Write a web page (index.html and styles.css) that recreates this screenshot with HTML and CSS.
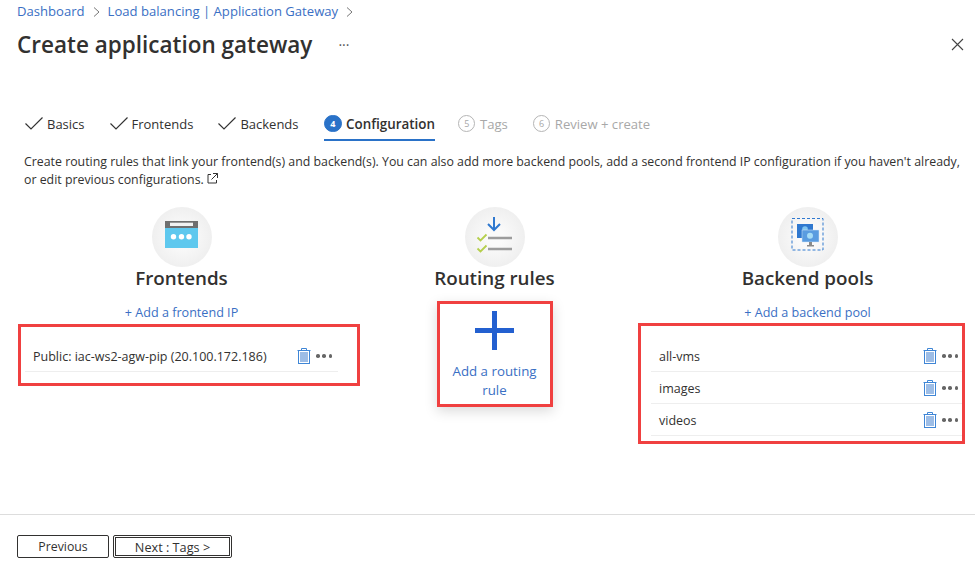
FILE: index.html
```html
<!DOCTYPE html>
<html lang="en">
<head>
    <meta charset="UTF-8">
    <meta name="viewport" content="width=device-width, initial-scale=1.0">
    <title>Create application gateway</title>
    <link rel="stylesheet" href="styles.css">
</head>
<body>
    <div class="top">
        <nav class="crumbs">
            <a>Dashboard</a>
            <svg class="crumb-sep" width="7" height="10" viewBox="0 0 7 10"><path d="M1 .5 6 5 1 9.500" fill="none" stroke="#777" stroke-width="1"/></svg>
            <a>Load balancing | Application Gateway</a>
            <svg class="crumb-sep" width="7" height="10" viewBox="0 0 7 10"><path d="M1 .5 6 5 1 9.500" fill="none" stroke="#777" stroke-width="1"/></svg>
        </nav>
        <div class="title-row">
            <h1>Create application gateway</h1>
            <span class="title-more">···</span>
            <svg class="close" width="13" height="13" viewBox="0 0 13 13"><path d="M1 1 12 12M12 1 1 12" stroke="#444" stroke-width="1.100"/></svg>
        </div>
    </div>

    <div class="tabs">
        <div class="tab done"><svg width="18" height="13" viewBox="0 0 18 13"><path d="M.5 6.500 6 12 17.500 .5" fill="none" stroke="#333" stroke-width="1.200"/></svg>Basics</div>
        <div class="tab done"><svg width="18" height="13" viewBox="0 0 18 13"><path d="M.5 6.500 6 12 17.500 .5" fill="none" stroke="#333" stroke-width="1.200"/></svg>Frontends</div>
        <div class="tab done"><svg width="18" height="13" viewBox="0 0 18 13"><path d="M.5 6.500 6 12 17.500 .5" fill="none" stroke="#333" stroke-width="1.200"/></svg>Backends</div>
        <div class="tab active"><span class="step">4</span>Configuration</div>
        <div class="tab off"><span class="step">5</span>Tags</div>
        <div class="tab off"><span class="step">6</span>Review + create</div>
    </div>

    <p class="intro">Create routing rules that link your frontend(s) and backend(s). You can also add more backend pools, add a second frontend IP configuration if you haven't already, or edit previous configurations.
        <svg width="11" height="11" viewBox="0 0 11 11"><path d="M4 1.500H1v8.500h8.500V7M6 .5h4.500V5M10.500 .5 4.500 6.500" fill="none" stroke="#333" stroke-width="1"/></svg>
    </p>

    <main class="cols">
        <section class="col">
            <div class="badge">
                <svg width="60" height="60" viewBox="0 0 60 60">
                    <rect x="13" y="14" width="33" height="27" fill="#5ec8ee"/>
                    <rect x="13" y="14" width="33" height="7" fill="#6f6f6f"/>
                    <rect x="18" y="15.700" width="23" height="3.300" fill="#f2f2f2"/>
                    <circle cx="21.500" cy="29.700" r="2.700" fill="#fff"/><circle cx="29.500" cy="29.700" r="2.700" fill="#fff"/><circle cx="37" cy="29.700" r="2.700" fill="#fff"/>
                </svg>
            </div>
            <h2>Frontends</h2>
            <a class="add">+ Add a frontend IP</a>
            <div class="list">
                <div class="row"><span>Public: iac-ws2-agw-pip (20.100.172.186)</span>
                    <svg class="trash" width="14" height="16" viewBox="0 0 14 16"><path d="M4.500 2.500V.5h5v2M.5 2.500h13" fill="none" stroke="#3f86d6"/><rect x="1.500" y="2.500" width="11" height="13" fill="#fff" stroke="#3f86d6"/><rect x="3" y="4" width="8" height="10" fill="#9dbde6"/></svg>
                    <span class="dots"><i></i><i></i><i></i></span>
                </div>
                <div class="mark mark-front"></div>
            </div>
        </section>

        <section class="col">
            <div class="badge">
                <svg width="60" height="60" viewBox="0 0 60 60">
                    <path d="M29 10v13M23 17l6 6 6-6" fill="none" stroke="#2f78cf" stroke-width="2"/>
                    <path d="M12.500 30.500l3 3 6-6M12.500 41.500l3 3 6-6" fill="none" stroke="#b5cf4c" stroke-width="1.800"/>
                    <path d="M23 31h24M23 42h24" stroke="#9c9c9c" stroke-width="2.500"/>
                </svg>
            </div>
            <h2>Routing rules</h2>
            <div class="rule-card">
                <svg width="39" height="39" viewBox="0 0 39 39"><path d="M19.500 0v39M0 19.500h39" stroke="#2360d0" stroke-width="5"/></svg>
                <a>Add a routing rule</a>
            </div>
        </section>

        <section class="col">
            <div class="badge">
                <svg width="60" height="60" viewBox="0 0 60 60">
                    <rect x="14" y="11.500" width="31" height="31.500" fill="none" stroke="#2f78cf" stroke-dasharray="3 2"/>
                    <rect x="19" y="17" width="16" height="14" fill="#2f78cf"/>
                    <circle cx="27" cy="22" r="2.800" fill="#7fc4ef"/>
                    <rect x="24" y="23" width="17" height="12" fill="#5a9ce0" stroke="#d8e8f8" stroke-width=".5"/>
                    <circle cx="32" cy="28.700" r="3" fill="#a6dcf6"/>
                    <path d="M31 35h3v3h2v1.500h-7V38h2z" fill="#8a8a8a"/>
                </svg>
            </div>
            <h2>Backend pools</h2>
            <a class="add">+ Add a backend pool</a>
            <div class="list">
                <div class="row"><span>all-vms</span>
                    <svg class="trash" width="14" height="16" viewBox="0 0 14 16"><path d="M4.500 2.500V.5h5v2M.5 2.500h13" fill="none" stroke="#3f86d6"/><rect x="1.500" y="2.500" width="11" height="13" fill="#fff" stroke="#3f86d6"/><rect x="3" y="4" width="8" height="10" fill="#9dbde6"/></svg>
                    <span class="dots"><i></i><i></i><i></i></span>
                </div>
                <div class="row"><span>images</span>
                    <svg class="trash" width="14" height="16" viewBox="0 0 14 16"><path d="M4.500 2.500V.5h5v2M.5 2.500h13" fill="none" stroke="#3f86d6"/><rect x="1.500" y="2.500" width="11" height="13" fill="#fff" stroke="#3f86d6"/><rect x="3" y="4" width="8" height="10" fill="#9dbde6"/></svg>
                    <span class="dots"><i></i><i></i><i></i></span>
                </div>
                <div class="row"><span>videos</span>
                    <svg class="trash" width="14" height="16" viewBox="0 0 14 16"><path d="M4.500 2.500V.5h5v2M.5 2.500h13" fill="none" stroke="#3f86d6"/><rect x="1.500" y="2.500" width="11" height="13" fill="#fff" stroke="#3f86d6"/><rect x="3" y="4" width="8" height="10" fill="#9dbde6"/></svg>
                    <span class="dots"><i></i><i></i><i></i></span>
                </div>
                <div class="mark mark-back"></div>
            </div>
        </section>
    </main>

    <footer class="foot">
        <button class="btn">Previous</button>
        <button class="btn btn-next">Next : Tags &gt;</button>
    </footer>
</body>
</html>
```

FILE: styles.css
```css
html, body {
    margin: 0;
    height: 100%;
}
body {
    display: flex;
    flex-direction: column;
    height: 567px;
    overflow: hidden;
    background-color: white;
    color: #323130;
    font-family: "Open Sans", "Noto Sans", sans-serif;
    font-size: 12.5px;
}
a {
    color: #3a6fc4;
}

.top {
    padding: 2px 11px 0 17px;
}
.crumbs {
    display: flex;
    align-items: center;
    gap: 8px;
    height: 17px;
    font-size: 13.100px;
}
.crumb-sep {
    margin-top: 2px;
}
.title-row {
    display: flex;
    align-items: center;
    margin-top: 8px;
    height: 34px;
}
h1 {
    margin: 0;
    font-size: 22.500px;
    font-weight: 600;
    color: #323130;
}
.title-more {
    margin-left: 26px;
    font-size: 14px;
    color: #555;
}
.close {
    margin-left: auto;
}

.tabs {
    display: flex;
    gap: 25px;
    margin: 47px 0 0 25px;
    height: 33px;
}
.tab {
    display: flex;
    align-items: center;
    gap: 4px;
    box-sizing: border-box;
    height: 33px;
    padding-bottom: 2px;
    font-size: 13px;
    white-space: nowrap;
}
.tab.active {
    gap: 4.500px;
    margin: 0 -2px 0 .5px;
    font-size: 13.400px;
    font-weight: 600;
    padding-bottom: 0;
    border-bottom: 2px solid #2a72c8;
}
.tab.off {
    gap: 4.500px;
    color: #a8a8a8;
    font-size: 13.100px;
}
.step {
    display: flex;
    align-items: center;
    justify-content: center;
    width: 17.500px;
    height: 17.500px;
    box-sizing: border-box;
    border: 1px solid #b5b5b5;
    border-radius: 50%;
    font-size: 9px;
}
.active .step {
    background-color: #2a72c8;
    border-color: #2a72c8;
    color: white;
    font-weight: 700;
}

.intro {
    margin: 12px 10px 0 24px;
    font-size: 12.350px;
    line-height: 18px;
}

.cols {
    display: grid;
    grid-template-columns: repeat(3, 313px);
    margin: 18px 0 0 25px;
}
.col {
    display: flex;
    flex-direction: column;
    align-items: center;
}
.badge {
    display: flex;
    width: 60px;
    height: 60px;
    border-radius: 50%;
    background: radial-gradient(circle, #fafafa 20%, #e9e9e9 100%);
}
h2 {
    margin: -1px 0 0;
    height: 24px;
    line-height: 24px;
    font-size: 18.800px;
    font-weight: 600;
}
.add {
    margin-top: 13px;
    line-height: 20px;
    font-size: 12.600px;
}

.list {
    position: relative;
    align-self: stretch;
    margin-top: 17px;
}
.row {
    display: flex;
    align-items: center;
    box-sizing: border-box;
    height: 32px;
    padding: 1px 0 0 8px;
    border-bottom: 1px solid #eeeeee;
}
.row > span:first-child {
    flex: 1;
}
.trash {
    margin-right: 5px;
}
.dots {
    display: flex;
    gap: 2.750px;
    margin-right: 6px;
}
.dots i {
    width: 3.500px;
    height: 3.500px;
    border-radius: 50%;
    background-color: #666;
}

/* red annotation boxes drawn over the lists */
.mark {
    position: absolute;
    border: 3px solid #f04040;
    box-sizing: border-box;
}
.mark-front {
    left: -7px;
    top: -16px;
    width: 342px;
    height: 62px;
}
.mark-back {
    left: -13px;
    top: -17px;
    width: 327px;
    height: 121px;
}

.rule-card {
    display: flex;
    flex-direction: column;
    align-items: center;
    box-sizing: border-box;
    width: 116px;
    height: 106px;
    margin-top: 11px;
    padding-top: 7px;
    border: 3px solid #f04040;
    text-align: center;
    font-size: 13.300px;
    line-height: 19px;
    box-shadow: 0 4px 12px rgba(0, 0, 0, 0.15);
}
.rule-card a {
    margin-top: 12px;
    width: 100px;
}

.foot {
    display: flex;
    gap: 4px;
    margin-top: auto;
    padding: 20px 0 9px 17px;
    border-top: 1px solid #dddddd;
}
.btn {
    height: 23px;
    width: 92px;
    padding: 0;
    background-color: white;
    border: 1px solid #323130;
    border-radius: 2px;
    color: #323130;
    font-family: inherit;
    font-size: 12.300px;
    font-weight: 500;
}
.btn-next {
    width: 119px;
    font-size: 12.700px;
    border: 3px double #323130;
}
```
